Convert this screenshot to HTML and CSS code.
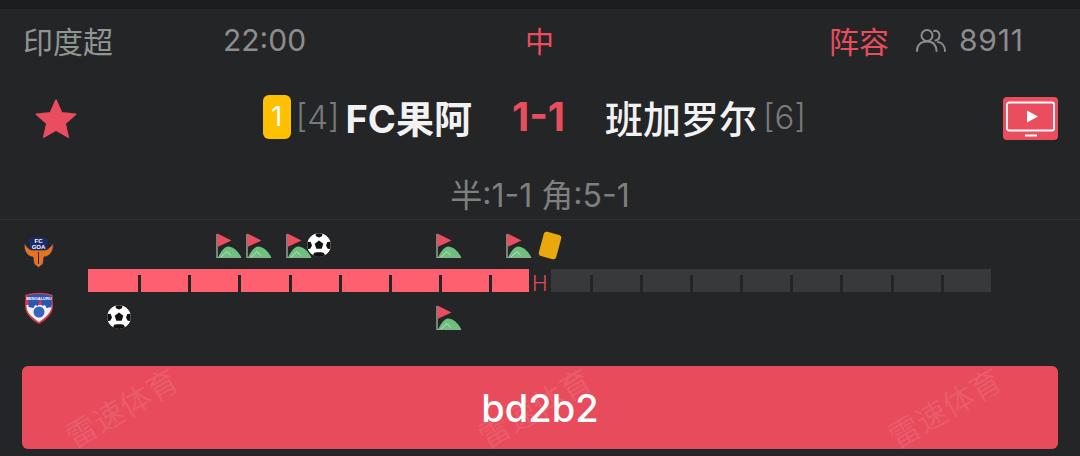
FILE: index.html
```html
<!DOCTYPE html>
<html lang="zh-CN">
<head>
    <meta charset="UTF-8">
    <meta name="viewport" content="width=device-width, initial-scale=1.0">
    <title>印度超 - FC果阿 1-1 班加罗尔</title>
    <link rel="stylesheet" href="styles.css">
</head>
<body>
    <svg class="defs" width="0" height="0" aria-hidden="true">
        <symbol id="corner" viewBox="0 0 26 25">
            <path d="M1 25V1" stroke="#8f9a94" stroke-width="1.6" fill="none"/>
            <path d="M1.500 .5L15.500 7.500 1.500 14z" fill="#e94d5e"/>
            <path d="M2 24.500C5 18 9 13.500 12 13.500c5 0 10 4.500 13.500 11z" fill="#6fbf7f"/>
            <path d="M5 24L11 18.500l3.500 4" stroke="#d8eedd" stroke-width=".7" fill="none"/>
            <path d="M1 24.500H25" stroke="#8fae98" stroke-width="1"/>
        </symbol>
        <symbol id="ball" viewBox="0 0 24 24">
            <circle cx="12" cy="12" r="11.800" fill="#fff"/>
            <path d="M12 7.600l4.300 3.100-1.600 5H9.300l-1.600-5z" fill="#111"/>
            <path d="M8.500 .8A11.800 11.800 0 0 1 15.500 .8L15 3.200 12 4.400 9 3.200zM23.300 8.800a11.800 11.800 0 0 1-.3 7.200l-2.300-.3-1.700-3.300 1.300-3.400zM.7 8.800a11.800 11.800 0 0 0 .3 7.200l2.300-.3 1.700-3.300-1.300-3.400zM6 22.200a11.800 11.800 0 0 0 12 0l-1.300-2.500-2.700-.4h-4l-2.700.4z" fill="#111"/>
        </symbol>
    </svg>

    <main class="match">
        <div class="info-row">
            <span class="league">印度超</span>
            <span class="kickoff">22:00</span>
            <span class="period">中</span>
            <span class="lineup">阵容</span>
            <span class="viewers">
                <svg class="people-icon" viewBox="0 0 30 24" fill="none" stroke="#8d8d8d" stroke-width="2" stroke-linecap="round">
                    <circle cx="11" cy="7.500" r="5.500"/>
                    <path d="M1 23c0-6 4-9.500 10-9.500 3 0 5.500 .8 7 2.500 1.500 1.700 2.500 4 2.500 7"/>
                    <path d="M18 3c3-.8 5.500 1.500 5.500 4.500 0 2.500-1.500 4.500-4 5"/>
                    <path d="M22 14c4 .5 7 4 7 9"/>
                </svg>
                <span>8911</span>
            </span>
        </div>

        <div class="score-row">
            <svg class="star" viewBox="0 0 42 40">
                <path d="M21 2l5.700 12.800 14 1.400-10.500 9.300 3 13.700L21 32.200 8.800 39.200l3-13.700L1.300 16.200l14-1.400z" fill="#e94d5e" stroke="#e94d5e" stroke-width="1.500" stroke-linejoin="round"/>
            </svg>
            <div class="teams">
                <div class="team team-home">
                    <span class="card-count">1</span>
                    <span class="rank">[4]</span>
                    <span class="team-name">FC果阿</span>
                </div>
                <div class="score">1-1</div>
                <div class="team team-away">
                    <span class="team-name">班加罗尔</span>
                    <span class="rank">[6]</span>
                </div>
            </div>
            <svg class="tv" viewBox="0 0 55 43">
                <rect width="55" height="43" rx="4" fill="#e94d5e"/>
                <rect x="4" y="5.500" width="47" height="28" rx="2" fill="none" stroke="#fff" stroke-width="1.800"/>
                <path d="M24 13.500l11 6-11 6z" fill="#fff"/>
                <rect x="22" y="37.500" width="12" height="2" fill="#fff"/>
            </svg>
        </div>

        <div class="stats-row">半:1-1 角:5-1</div>

        <section class="timeline">
            <div class="track">
                <svg class="crest" viewBox="0 0 30 32">
                    <path d="M.5 7C-1 15 4 21 9 21l1 7 4.500 3.500L19 28l1-7c5 0 10.500-6 9-14-2 4-5 6.500-8 7H8C5 13.500 2.500 11 .5 7z" fill="#e8731c" stroke="#1b2a6b" stroke-width=".8"/>
                    <path d="M5 3.500C9 0 20 0 24 3.500L23 13.500H6z" fill="#1b2a6b"/>
                    <path d="M14.500 16v12" stroke="#1b2a6b" stroke-width="1"/>
                    <text x="14.500" y="6.500" class="crest-text">FC</text>
                    <text x="14.500" y="12.500" class="crest-text">GOA</text>
                </svg>
                <svg class="event" style="left:216px"><use href="#corner"/></svg>
                <svg class="event" style="left:246px"><use href="#corner"/></svg>
                <svg class="event" style="left:286px"><use href="#corner"/></svg>
                <svg class="event event-ball" style="left:307px"><use href="#ball"/></svg>
                <svg class="event" style="left:436px"><use href="#corner"/></svg>
                <svg class="event" style="left:506px"><use href="#corner"/></svg>
                <span class="yellow-card"></span>
            </div>

            <div class="progress">
                <div class="half half-played">
                    <span class="seg seg-first"></span><span class="seg"></span><span class="seg"></span><span class="seg"></span><span class="seg"></span><span class="seg"></span><span class="seg"></span><span class="seg"></span><span class="seg seg-fill"></span>
                </div>
                <span class="half-mark">H</span>
                <div class="half half-left">
                    <span class="seg seg-short"></span><span class="seg"></span><span class="seg"></span><span class="seg"></span><span class="seg"></span><span class="seg"></span><span class="seg"></span><span class="seg"></span><span class="seg seg-fill"></span>
                </div>
            </div>

            <div class="track track-away">
                <svg class="crest" viewBox="0 0 30 32">
                    <path d="M1 3c9-3 19-3 28 0-1 3 0 6 0 11 0 8-7 14-14 18C8 28 1 22 1 14c0-5 1-8 0-11z" fill="#d9394a"/>
                    <path d="M2.500 13h25v1.500c0 6-6 11-12.500 15.500C9 26 2.500 21 2.500 14.500z" fill="#eef1f6"/>
                    <path d="M2 4c8-2.500 18-2.500 26 0-.5 3-.5 6-.5 11l-5 1-1.500-3-3 1-1-6h-2l-1 6-3-1-1.500 3-5-1c0-5 0-8-.5-11z" fill="#2a55b0"/>
                    <circle cx="15" cy="20" r="5.500" fill="#3a64ba"/>
                    <text x="15" y="7.500" class="crest-text crest-text-long">BENGALURU</text>
                </svg>
                <svg class="event event-ball" style="left:107px"><use href="#ball"/></svg>
                <svg class="event" style="left:436px"><use href="#corner"/></svg>
            </div>
        </section>

        <div class="action-wrap">
            <button class="action">bd2b2</button>
            <span class="watermark watermark-a">雷速体育</span>
            <span class="watermark watermark-b">雷速体育</span>
            <span class="watermark watermark-c">雷速体育</span>
        </div>
    </main>
</body>
</html>
```

FILE: styles.css
```css
* {
    box-sizing: border-box;
}
body {
    margin: 0;
    height: 456px;
    overflow: hidden;
    background-color: #242527;
    font-family: Inter, "Noto Sans CJK SC", sans-serif;
    color: #8d8d8d;
}
.defs {
    position: absolute;
}
.match {
    border-top: 9px solid #1c1d1f;
}

/* top line */
.info-row {
    display: grid;
    grid-template-columns: 200px 302px 304px 87px auto;
    align-items: center;
    height: 62px;
    padding-left: 23px;
    font-size: 30px;
}
.league {
    font-size: 30px;
    color: #8f9691;
}
.period {
    font-size: 29px;
    color: #e94d5e;
}
.lineup {
    font-size: 30px;
    color: #e94d5e;
}
.viewers {
    display: flex;
    align-items: center;
    gap: 13px;
    letter-spacing: 0.8px;
}
.people-icon {
    width: 30px;
    height: 24px;
}

/* score line */
.score-row {
    display: flex;
    align-items: center;
    height: 94px;
    padding: 0 22px 0 35px;
}
.star {
    width: 42px;
    height: 40px;
}
.tv {
    width: 55px;
    height: 43px;
}
.teams {
    flex: 1;
    display: grid;
    grid-template-columns: 1fr auto 1fr;
    column-gap: 40px;
    align-items: center;
    padding-right: 3px;
    margin-top: -3px;
}
.team {
    display: flex;
    align-items: center;
    gap: 6px;
}
.team-home {
    justify-content: flex-end;
}
.team-name {
    font-size: 38px;
    font-weight: 700;
    color: #f2f2f2;
}
.team-away .team-name {
    font-weight: 500;
}
.rank {
    font-size: 33px;
    font-weight: 300;
    color: #7a7a7a;
}
.card-count {
    width: 28px;
    height: 44px;
    line-height: 44px;
    margin-right: -1px;
    text-align: center;
    border-radius: 6px;
    background-color: #ffc000;
    color: white;
    font-size: 27px;
}
.score {
    font-size: 40px;
    font-weight: 700;
    color: #e94d5e;
}
.stats-row {
    height: 55px;
    padding-top: 11px;
    text-align: center;
    font-size: 32px;
    line-height: 40px;
    color: #7f7f7f;
    border-bottom: 1px solid #313234;
}

/* event timeline */
.timeline {
    padding-top: 11px;
}
.track {
    position: relative;
    height: 38px;
}
.track-away {
    height: 72px;
}
.crest {
    position: absolute;
    left: 24px;
    top: 5px;
    width: 30px;
    height: 32px;
}
.track-away .crest {
    top: 0;
}
.crest-text {
    font-family: "Liberation Sans", sans-serif;
    font-size: 6px;
    font-weight: 700;
    fill: white;
    text-anchor: middle;
}
.crest-text-long {
    font-size: 4px;
}
.event {
    position: absolute;
    top: 2px;
    width: 26px;
    height: 25px;
}
.event-ball {
    width: 24px;
    height: 24px;
}
.track-away .event {
    top: 13px;
}
.yellow-card {
    position: absolute;
    left: 541px;
    top: 2px;
    width: 18px;
    height: 25px;
    border-radius: 3px;
    background-color: #e8a90f;
    transform: rotate(15deg);
}
.progress {
    display: flex;
    height: 23px;
    padding-left: 88px;
}
.half {
    display: flex;
    width: 441px;
    background-color: #ff6070;
}
.half-left {
    width: 440px;
    background-color: #38393b;
}
.seg {
    position: relative;
    flex: 0 0 50.2px;
}
.seg-first {
    flex-basis: 51.5px;
}
.seg-short {
    flex-basis: 40px;
}
.seg-fill {
    flex: 1;
}
.seg::after {
    content: "";
    position: absolute;
    right: -1.5px;
    top: 6px;
    bottom: 0;
    width: 3px;
    background-color: #242527;
}
.seg-fill::after {
    display: none;
}
.half-mark {
    width: 22px;
    padding: 2px 0 0 3px;
    font-size: 21px;
    font-weight: 300;
    line-height: 25px;
    color: #e0475a;
}

/* action button */
.action-wrap {
    position: relative;
    margin: 0 22px;
    padding-top: 2px;
}
.action {
    display: block;
    width: 100%;
    height: 83px;
    border: none;
    border-radius: 6px;
    background-color: #e84c5c;
    color: white;
    font-family: Inter, sans-serif;
    font-size: 38px;
    font-weight: 500;
}
.watermark {
    position: absolute;
    top: 20px;
    font-size: 31px;
    color: rgba(255, 255, 255, 0.09);
    transform: rotate(-30deg);
}
.watermark-a {
    left: 37px;
}
.watermark-b {
    left: 450px;
}
.watermark-c {
    left: 860px;
}
```
